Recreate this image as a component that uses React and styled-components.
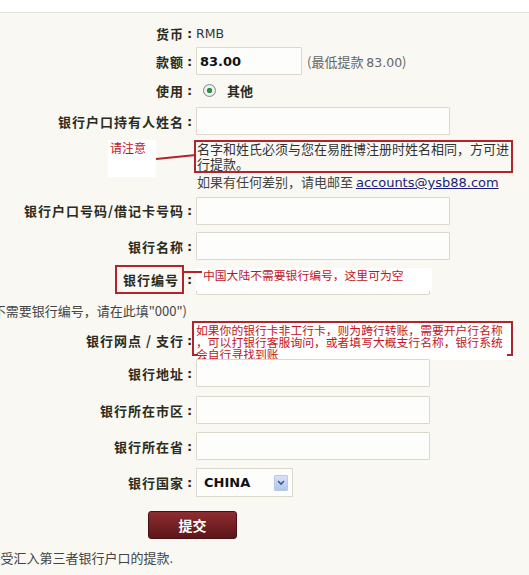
import React from 'react'
import styled, { createGlobalStyle } from 'styled-components'

const GlobalStyle = createGlobalStyle`
    body {
        margin: 0;
        background: #f9f8f3;
        font-family: "Noto Sans CJK SC", "DejaVu Sans", sans-serif;
        color: #333;
    }
`

const RED = '#b3232b'

function App() {
    return (
        <>
            <GlobalStyle />
            <TopBar />
            <Form>
                <Row $h={28}>
                    <Label>货币<Colon>:</Colon></Label>
                    <Field><Plain>RMB</Plain></Field>
                </Row>

                <Row $h={28}>
                    <Label>款额<Colon>:</Colon></Label>
                    <Field>
                        <TextInput $w={106} defaultValue="83.00" $bold />
                        <Hint>(最低提款 <Num>83.00</Num>)</Hint>
                    </Field>
                </Row>

                <Row $h={26} $mt={2}>
                    <Label>使用<Colon>:</Colon></Label>
                    <Field>
                        <Radio />
                        <Choice>其他</Choice>
                    </Field>
                </Row>

                <Row $h={28} $mt={4}>
                    <Label>银行户口持有人姓名<Colon>:</Colon></Label>
                    <Field><TextInput $w={254} /></Field>
                </Row>

                <NoticeRow>
                    <NoticeSide>
                        <NoteTag>请注意</NoteTag>
                        <svg width="40" height="37" viewBox="0 0 40 37">
                            <line x1="0" y1="19" x2="40" y2="15" stroke={RED} strokeWidth="2" />
                        </svg>
                    </NoticeSide>
                    <NoticeBody>
                        <RedBox>名字和姓氏必须与您在易胜博注册时姓名相同，方可进<br />行提款。</RedBox>
                        <EmailLine>如果有任何差别，请电邮至 <Mail href="#">accounts@ysb88.com</Mail></EmailLine>
                    </NoticeBody>
                </NoticeRow>

                <Row $h={27} $mt={6}>
                    <Label>银行户口号码/借记卡号码<Colon>:</Colon></Label>
                    <Field><TextInput $w={254} /></Field>
                </Row>

                <Row $h={28} $mt={8}>
                    <Label>银行名称<Colon>:</Colon></Label>
                    <Field><TextInput $w={254} /></Field>
                </Row>

                <Row $h={31} $mt={4}>
                    <Label>
                        <LabelBox>银行编号</LabelBox>
                        <Colon>:</Colon>
                    </Label>
                    <Field $end>
                        <TextInput $w={234} $h={27} />
                        <CodeNote>
                            <CodeLink />
                            中国大陆不需要银行编号，这里可为空
                        </CodeNote>
                    </Field>
                </Row>

                <HintRow>(如果您不需要银行编号，请在此填"000")</HintRow>

                <Row $h={38} $mt={2}>
                    <Label>银行网点 / 支行<Colon>:</Colon></Label>
                    <Field>
                        <BranchNote>
                            <BranchFrame>
                                如果你的银行卡非工行卡，则为跨行转账，需要开户行名称<br />
                                ，可以打银行客服询问，或者填写大概支行名称，银行系统<br />
                                会自行寻找到账
                            </BranchFrame>
                        </BranchNote>
                    </Field>
                </Row>

                <Row $h={28}>
                    <Label>银行地址<Colon>:</Colon></Label>
                    <Field><TextInput $w={234} /></Field>
                </Row>

                <Row $h={28} $mt={9}>
                    <Label>银行所在市区<Colon>:</Colon></Label>
                    <Field><TextInput $w={234} /></Field>
                </Row>

                <Row $h={28} $mt={8}>
                    <Label>银行所在省<Colon>:</Colon></Label>
                    <Field><TextInput $w={234} /></Field>
                </Row>

                <Row $h={29} $mt={8}>
                    <Label>银行国家<Colon>:</Colon></Label>
                    <Field>
                        <SelectBox>
                            <span>CHINA</span>
                            <ArrowBtn>
                                <svg width="8" height="6" viewBox="0 0 8 6">
                                    <path d="M1 1 L4 4 L7 1" fill="none" stroke="#3f5a8c" strokeWidth="1.6" />
                                </svg>
                            </ArrowBtn>
                        </SelectBox>
                    </Field>
                </Row>

                <Row $h={28} $mt={14}>
                    <Submit type="button">提交</Submit>
                </Row>

                <FooterNote>本公司不接受汇入第三者银行户口的提款.</FooterNote>
            </Form>
        </>
    )
}

const TopBar = styled.div`
    height: 12px;
    background: #fff;
    border-bottom: 1px solid #e3e0d7;
`

const Form = styled.div`
    padding-top: 6px;
`

const Row = styled.div`
    display: flex;
    align-items: center;
    height: ${p => p.$h || 28}px;
    margin-top: ${p => p.$mt || 0}px;
`

const Label = styled.div`
    width: 193px;
    flex: none;
    display: flex;
    justify-content: flex-end;
    align-items: center;
    font-size: 13px;
    font-weight: bold;
    letter-spacing: 1px;
    color: #2b2b20;
    white-space: nowrap;
`

const Colon = styled.span`
    margin-left: 3px;
    width: 6px;
    letter-spacing: 0;
    font-family: "DejaVu Sans", sans-serif;
    font-size: 13px;
`

const LabelBox = styled.span`
    height: 29px;
    box-sizing: border-box;
    border: 2px solid ${RED};
    padding: 0 3px 0 6px;
    display: flex;
    align-items: center;
`

const Field = styled.div`
    position: relative;
    margin-left: 3px;
    display: flex;
    align-items: center;
    align-self: ${p => (p.$end ? 'flex-end' : 'center')};
`

const Plain = styled.span`
    font-family: "DejaVu Sans", sans-serif;
    font-size: 12.5px;
    color: #333;
`

const TextInput = styled.input`
    width: ${p => p.$w}px;
    height: ${p => p.$h || 28}px;
    box-sizing: border-box;
    border: 1px solid #dcd8cc;
    border-radius: 1px;
    background: #fdfdfb;
    padding: 0 3px;
    font-family: "DejaVu Sans", sans-serif;
    font-size: 13px;
    font-weight: ${p => (p.$bold ? 'bold' : 'normal')};
    color: #111;
    outline: none;
`

const Hint = styled.span`
    margin-left: 5px;
    font-size: 13px;
    color: #666;
`

const Num = styled.span`
    font-family: "DejaVu Sans", sans-serif;
    font-size: 12.5px;
`

const Radio = styled.span`
    width: 11px;
    height: 11px;
    margin-left: 7px;
    border: 1px solid #7d8c8e;
    border-radius: 50%;
    background: radial-gradient(circle, #2f8f46 0 2.5px, #f4f6f4 3px, #d9dfdc 100%);
`

const Choice = styled.span`
    margin-left: 11px;
    font-size: 13px;
    font-weight: bold;
    color: #2b2b20;
`

const NoticeRow = styled.div`
    display: flex;
    margin-top: 5px;
`

const NoticeSide = styled.div`
    width: 196px;
    flex: none;
    display: flex;
    justify-content: flex-end;
    align-items: flex-start;
`

const NoteTag = styled.div`
    width: 46px;
    height: 37px;
    padding: 0 0 0 2px;
    background: #fff;
    color: #c0151f;
    font-size: 12px;
    line-height: 16px;
`

const NoticeBody = styled.div`
    margin-left: -2px;
`

const RedBox = styled.div`
    width: 319px;
    height: 33px;
    box-sizing: border-box;
    border: 2px solid ${RED};
    padding: 0 1px;
    font-size: 13px;
    line-height: 14.5px;
    color: #333;
    white-space: nowrap;
`

const EmailLine = styled.div`
    padding-left: 3px;
    font-size: 13px;
    line-height: 17px;
    color: #444;
    white-space: nowrap;
`

const Mail = styled.a`
    font-family: "DejaVu Sans", sans-serif;
    color: #1c1c7c;
    text-decoration: underline;
`

const CodeNote = styled.div`
    position: absolute;
    left: 0;
    top: 0;
    width: 236px;
    height: 23px;
    padding-left: 7px;
    box-sizing: border-box;
    background: #fff;
    color: #c0151f;
    font-size: 11.8px;
    line-height: 13px;
    white-space: nowrap;
`

const CodeLink = styled.span`
    position: absolute;
    left: -12px;
    top: 3px;
    width: 18px;
    height: 2px;
    background: ${RED};
`

const HintRow = styled.div`
    width: 187px;
    height: 16px;
    margin-top: 8px;
    display: flex;
    justify-content: flex-end;
    white-space: nowrap;
    font-size: 13px;
    line-height: 16px;
    color: #444;
`

const BranchNote = styled.div`
    margin-left: -4px;
    width: 323px;
    height: 39px;
    background: #fff;
`

const BranchFrame = styled.div`
    position: relative;
    width: 321px;
    height: 33px;
    box-sizing: border-box;
    border: 2px solid ${RED};
    border-bottom: none;
    padding: 1px 0 0 2px;
    font-size: 11.8px;
    line-height: 12px;
    color: #c0151f;
    white-space: nowrap;
    &::before, &::after {
        content: '';
        position: absolute;
        bottom: -2px;
        width: 6px;
        height: 2px;
        background: ${RED};
    }
    &::before { left: -2px; }
    &::after { right: -2px; }
`

const SelectBox = styled.div`
    width: 97px;
    height: 29px;
    box-sizing: border-box;
    border: 1px solid #dcd8cc;
    background: #fdfdfb;
    display: flex;
    align-items: center;
    justify-content: space-between;
    padding: 0 4px 0 7px;
    font-family: "DejaVu Sans", sans-serif;
    font-size: 13px;
    font-weight: bold;
    color: #111;
`

const ArrowBtn = styled.span`
    width: 14px;
    height: 16px;
    display: flex;
    align-items: center;
    justify-content: center;
    border-radius: 1px;
    background: linear-gradient(#d6e2f8, #b2c6ec);
    border: 1px solid #b8c9e6;
    box-sizing: border-box;
`

const Submit = styled.button`
    margin-left: 148px;
    width: 89px;
    height: 28px;
    border: 1px solid #4a1014;
    border-radius: 3px;
    background: linear-gradient(#8e2d31, #5c1519);
    color: #fff;
    font-family: "Noto Sans CJK SC", sans-serif;
    font-size: 14px;
    font-weight: bold;
    cursor: pointer;
`

const FooterNote = styled.div`
    width: 173px;
    height: 16px;
    margin-top: 11px;
    display: flex;
    justify-content: flex-end;
    white-space: nowrap;
    font-size: 13px;
    line-height: 16px;
    color: #444;
`

export default App
